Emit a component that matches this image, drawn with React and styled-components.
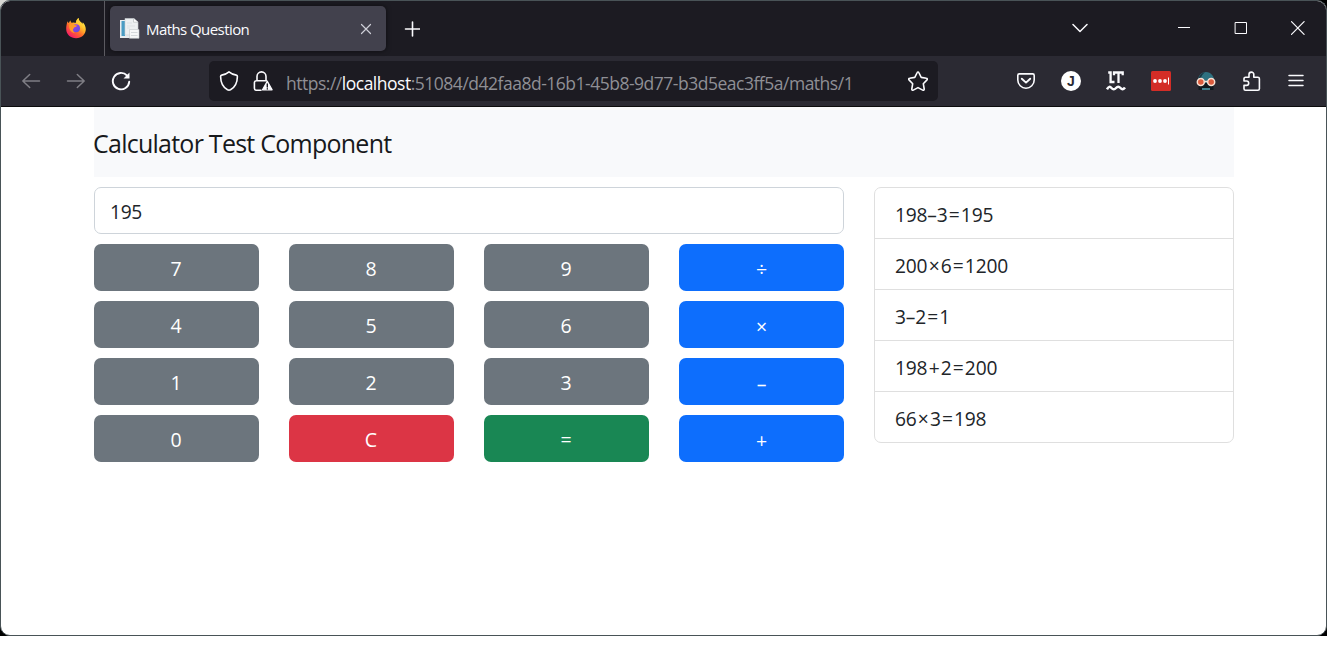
import React from 'react';
import styled, { createGlobalStyle } from 'styled-components';

const Global = createGlobalStyle`
  * { box-sizing: border-box; }
  html, body { margin: 0; background: #fff; overflow: hidden; }
  body { font-family: "Open Sans", "Noto Sans", sans-serif; }
  button { border: 0; padding: 0; background: none; color: inherit; font: inherit; }
  svg { display: block; flex: none; }
`;

const Desktop = styled.div`
  width: 1327px;
  height: 636px;
  background: linear-gradient(90deg, #d8d8d4 0 20px, #000 20px) top / 100% 20px no-repeat, #000;
`;
const Window = styled.div`
  width: 100%;
  height: 636px;
  border: 1px solid #495357;
  border-radius: 10px;
  overflow: hidden;
  background: #fff;
`;
const TitleBar = styled.header`
  height: 55px;
  display: flex;
  align-items: center;
  background: #1c1b22;
  color: #fbfbfe;
`;
const PinnedArea = styled.div`
  width: 104px;
  height: 55px;
  padding: 16px 0 0 64px;
  border-right: 1px solid #5c5b61;
`;
const Tab = styled.div`
  display: flex;
  align-items: center;
  width: 276px;
  height: 45px;
  margin-left: 5px;
  padding: 0 13px 0 10px;
  border-radius: 5px;
  background: #42414d;
  box-shadow: 0 0 5px rgba(0, 0, 0, 0.55);
`;
const TabTitle = styled.span`
  flex: 1;
  margin-left: 6px;
  font-size: 15px;
  line-height: 20px;
  letter-spacing: -0.57px;
  white-space: nowrap;
`;
const Cell = styled.button`
  width: ${(p) => p.$w || 44}px;
  height: 40px;
  display: flex;
  align-items: center;
  justify-content: center;
  color: ${(p) => (p.$dim ? '#7f7e85' : '#fbfbfe')};
`;
const WindowControls = styled.div`
  display: flex;
  margin-left: auto;
  padding-bottom: 1px;
`;
const Gap = styled.div`
  width: ${(p) => p.$w}px;
`;
const NavBar = styled.nav`
  height: 51px;
  display: flex;
  align-items: center;
  gap: 1px;
  padding-left: 8px;
  background: #2b2a33;
  border-bottom: 1px solid #0c0c0d;
`;
const UrlBar = styled.div`
  display: flex;
  align-items: center;
  width: 729px;
  height: 40px;
  margin: 0 65px 0 65px;
  padding: 0 10px;
  border-radius: 5px;
  background: #1c1b22;
  color: #fbfbfe;
`;
const Url = styled.div`
  flex: 1;
  padding-top: 3px;
  margin-left: 13px;
  font-size: 17.5px;
  line-height: 24px;
  letter-spacing: -0.49px;
  color: #8f8f95;
  white-space: nowrap;
  b { font-weight: 400; color: #fbfbfe; }
`;
const IconSpace = styled.span`
  margin-left: 14px;
`;

const Container = styled.main`
  width: 1140px;
  margin: 0 auto 0 93px;
  color: #212529;
`;
const PageHeader = styled.div`
  height: 70px;
  padding-top: 18px;
  background: #f8f9fb;
`;
const Heading = styled.h1`
  margin: 0 0 0 -1px;
  font-size: 25px;
  font-weight: 400;
  line-height: 36px;
  letter-spacing: -0.75px;
  color: #17191c;
`;
const Columns = styled.div`
  display: grid;
  grid-template-columns: 750px 360px;
  gap: 30px;
  align-items: start;
  padding-top: 10px;
`;
const Calculator = styled.section`
  display: grid;
  grid-template-columns: repeat(4, 165px);
  grid-auto-rows: 47px;
  gap: 10px 30px;
`;
const Display = styled.div`
  grid-column: 1 / -1;
  padding: 1px 15px 0;
  border: 1px solid #ced4da;
  border-radius: 7px;
  font-size: 19.2px;
  line-height: 45px;
  letter-spacing: -0.3px;
`;
const tones = { digit: '#6c757d', op: '#0d6efd', clear: '#dc3545', equals: '#198754' };
const Key = styled.button`
  && {
    padding: ${(p) => (p.$tone === 'op' ? '4px 0 0' : '2px 1px 0 0')};
    border-radius: 7px;
    background: ${(p) => tones[p.$tone]};
    color: #fff;
    font-size: 19.5px;
    line-height: 28px;
  }
`;
const History = styled.ul`
  margin: 0;
  padding: 0;
  list-style: none;
  border: 1px solid #dfdfdf;
  border-radius: 7px;
`;
const Entry = styled.li`
  height: 51px;
  padding: 4px 20px 0;
  font-size: 19.2px;
  line-height: 46px;
  letter-spacing: -0.2px;
  border-bottom: 1px solid #dfdfdf;
  &:last-child { height: 50px; border-bottom: 0; }
`;
const Operator = styled.span`
  margin: 0 1.3px;
`;

const Line = ({ size = 20, w = 1.5, children, ...rest }) => (
  <svg width={size} height={size} viewBox={`0 0 ${size} ${size}`} fill="none" stroke="currentColor"
    strokeWidth={w} strokeLinecap="round" strokeLinejoin="round" {...rest}>{children}</svg>
);

const Firefox = () => (
  <svg width="22" height="22" viewBox="0 0 22 22">
    <defs>
      <linearGradient id="fx" x1=".85" y1=".1" x2=".2" y2=".95">
        <stop offset="0" stopColor="#fff44f" /><stop offset=".35" stopColor="#ffb529" />
        <stop offset=".6" stopColor="#ff6a2b" /><stop offset="1" stopColor="#f5156c" />
      </linearGradient>
      <linearGradient id="globe" x1="0" y1="0" x2="1" y2="1">
        <stop offset="0" stopColor="#a83cf0" /><stop offset="1" stopColor="#5a50d8" />
      </linearGradient>
    </defs>
    <path fill="url(#fx)" d="M2.6 4.2c.3 1 .8 1.5 1.2 1.9L5.300 3.300c.2 1.300.9 2.100 1.600 2.600 1.300-.5 2.900-.3 3.700.2C11 3.900 12.200 2 13.600 1c0 2 1 3.200 2.400 4.300l1.300 1.500c.5-.3.5-1 .4-1.500 2 2 3.100 4.500 3.100 7 0 5-4.200 9-9.700 9S1.200 17.300 1.200 12c0-2.600.5-5.500 1.400-7.800z" />
    <circle cx="11" cy="11.300" r="4" fill="url(#globe)" />
    <path fill="#ff9a26" d="M4.300 7.600c1.600-1.200 3.800-.9 5 .1.800.6 1.700.6 2.700.7-.1 1.100-1.200 1.300-2.100 1.700-1 .5-1 1.700-1.900 2-.2 1.700.6 3 2 3.900-3.500.2-6.600-3.500-5.700-8.400z" />
    <path fill="#ffcf35" d="M13.600 1c0 2 1 3.200 2.400 4.300 2 1.700 3 4.200 2.300 7.300-.4-2.700-2-4.500-4.500-5.500-1.800-.8-2.700-2.200-2.300-3.700.4-1 1.100-1.800 2.100-2.400z" />
  </svg>
);
const Favicon = () => (
  <svg width="20" height="21" viewBox="0 0 20 21">
    <path d="M0 2h12v18H0z" fill="#e8ecef" />
    <path d="M1.500 3h3.500v15H1.500z" fill="#4a9cc4" />
    <path d="M5 .5h9l4 3.500V17H5z" fill="#edf0f2" stroke="#cbd0d3" strokeWidth=".6" />
    <path d="M13.500.8V4.200H18" fill="#fff" stroke="#b7bdc0" strokeWidth=".7" />
    <path d="M7 5h5M7 8h8M7 10h3" stroke="#dde1e4" />
    <path d="M9.500 11.500H19V20.300H9.500z" fill="#f7f8f9" stroke="#c3c8cb" strokeWidth=".6" />
    <path d="M11 14.500h6.500M11 17.500h6.500" stroke="#d5d9dc" />
  </svg>
);
const Back = () => <Line><path d="M18.500 10H1.800M8.700 3.500L1.800 10l6.900 6.500" /></Line>;
const Forward = () => <Line><path d="M1.500 10h16.700M11.300 3.500l6.900 6.500-6.900 6.500" /></Line>;
const Reload = () => (
  <Line w={1.900}>
    <path d="M18.200 10.800a8.200 8.200 0 1 1-2.200-6.300l1 1" />
    <path d="M18.500 1.500V7.500H12.500z" fill="currentColor" stroke="none" />
  </Line>
);
const Shield = () => (
  <Line w={1.600}><path d="M10 .9c2 1.700 4.500 2.900 7.300 3.200.7.1 1.100.6 1.100 1.300-.1 6.200-2.300 10.800-6.900 13.300-1 .5-2 .5-3 0C3.900 16.200 1.700 11.600 1.600 5.400c0-.7.4-1.200 1.100-1.300C5.500 3.800 8 2.600 10 .9z" /></Line>
);
const Lock = () => (
  <Line w={1.600}>
    <path d="M4 9.500V5.400a4.500 4.500 0 0 1 9 0v4M8 19.200H3.400a2 2 0 0 1-2-2v-5.500a2 2 0 0 1 2-2H13.500" />
    <path d="M14.300 10.300l4.800 8.500H9.500z" fill="#fbfbfe" strokeWidth="1.300" />
    <path d="M14.300 13v3M14.300 17.800v.2" stroke="#1c1b22" strokeWidth="1.400" />
  </Line>
);
const Star = () => (
  <Line w={1.600}><path d="M9.200 1.500c.3-.7 1.300-.7 1.600 0l2.400 4.900 5.200.8c.9.100 1.200 1.100.6 1.700l-3.700 3.800.9 5.300c.1.900-.7 1.500-1.500 1.100L10 16.600l-4.700 2.500c-.8.4-1.600-.2-1.500-1.100l.9-5.300L1 8.900c-.6-.6-.3-1.600.6-1.700l5.200-.8z" /></Line>
);
const Pocket = () => (
  <Line w={1.600}>
    <path d="M3.300 2.900h13.400c.9 0 1.500.6 1.500 1.500V9a8.200 8.200 0 0 1-16.400 0V4.400c0-.9.600-1.500 1.500-1.500z" />
    <path d="M5.800 7.700L10 11.600l4.200-3.900" strokeWidth="1.900" />
  </Line>
);
const Avatar = styled.span`
  width: 20px;
  height: 20px;
  border-radius: 50%;
  background: #fff;
  color: #2b2a33;
  font: 700 14px/20px "Liberation Sans", sans-serif;
  text-align: center;
`;
const LanguageTool = () => (
  <Line w={2.300} strokeLinecap="butt">
    <path d="M2.200 1.500H4.600V11H8.500M8 4.300V1.500H16.700V4.300M12.500 1.500V12" strokeLinejoin="miter" />
    <path d="M1 18.300c1.600-3 3-3 4.500-1.300s3 1.700 4.500 0 3-1.700 4.500 0 3 1.700 4.500-.5" strokeWidth="2.500" />
  </Line>
);
const LastPass = () => (
  <svg width="20" height="20" viewBox="0 0 20 20">
    <rect width="20" height="20" rx="1.500" fill="#d32d27" />
    <g fill="#fff"><circle cx="4" cy="10" r="1.900" /><circle cx="9" cy="10" r="1.900" /><circle cx="14" cy="10" r="1.900" /><path d="M17 6.500h1v7h-1z" /></g>
  </svg>
);
const Goggles = () => (
  <svg width="20" height="20" viewBox="0 0 20 20">
    <path d="M1.500 12C1.500 5 5 1 10 1s8.500 4 8.500 11z" fill="#2e7180" />
    <path d="M2.500 7C4 3.500 6.500 1.700 9 1.300 6.500 3 5 5.500 5 7.500z" fill="#173540" />
    <path d="M2.500 12h15v7h-15z" fill="#10191f" />
    <path d="M6 17h8V19H6z" fill="#3f7f8c" />
    <g fill="#db5b3d" stroke="#f6dfd2" strokeWidth="1.500"><circle cx="4.800" cy="11" r="3.500" /><circle cx="15.200" cy="11" r="3.500" /></g>
    <path d="M8.300 10.500h3.400" stroke="#f6dfd2" strokeWidth="1.500" />
  </svg>
);
const Puzzle = () => (
  <Line w={1.600}><path d="M4.700 6.200H8V3.500a2.400 2.400 0 0 1 4.800 0v2.700H16.900a1.500 1.500 0 0 1 1.500 1.500V17.700a1.500 1.500 0 0 1-1.500 1.500H4.500a1.500 1.500 0 0 1-1.500-1.500V14.400H5.500a2.200 2.200 0 0 0 0-4.400H3V7.700a1.500 1.500 0 0 1 1.700-1.500z" /></Line>
);
const Menu = () => <Line><path d="M3 4.500h14M3 9.500h14M3 14.500h14" /></Line>;

const keys = [
  ['7', 'digit'], ['8', 'digit'], ['9', 'digit'], ['÷', 'op'],
  ['4', 'digit'], ['5', 'digit'], ['6', 'digit'], ['×', 'op'],
  ['1', 'digit'], ['2', 'digit'], ['3', 'digit'], ['–', 'op'],
  ['0', 'digit'], ['C', 'clear'], ['=', 'equals'], ['+', 'op'],
];
const history = ['198–3=195', '200×6=1200', '3–2=1', '198+2=200', '66×3=198'];

const Sum = ({ text }) => text.split(/([×+=])/).map((part, i) => (
  i % 2 ? <Operator key={i}>{part}</Operator> : part
));

export default function App() {
  return (
    <Desktop>
      <Global />
      <Window>
        <TitleBar>
          <PinnedArea><Firefox /></PinnedArea>
          <Tab>
            <Favicon />
            <TabTitle>Maths Question</TabTitle>
            <Line size={14} w={1.200} color="#cfcfd8"><path d="M2.500 2.500l9 9M11.500 2.500l-9 9" /></Line>
          </Tab>
          <Gap $w={4} />
          <Cell><Line size={16} w={1.600}><path d="M8.500 1v14M1.500 8h14" /></Line></Cell>
          <WindowControls>
            <Cell><Line size={16}><path d="M1 4.500l7 7 7-7" /></Line></Cell>
            <Gap $w={53} />
            <Cell $w={57}><Line size={14} w={1} strokeLinecap="butt"><path d="M1 6.500h12" /></Line></Cell>
            <Cell $w={57}><Line size={14} w={1} strokeLinejoin="miter"><path d="M1.500 1.500h11v11h-11z" /></Line></Cell>
            <Cell $w={57}><Line size={14} w={1.200}><path d="M.5.700l12.600 12.600M13.100.7L.5 13.300" /></Line></Cell>
          </WindowControls>
        </TitleBar>
        <NavBar>
          <Cell $dim><Back /></Cell>
          <Cell $dim><Forward /></Cell>
          <Cell><Reload /></Cell>
          <UrlBar>
            <Shield />
            <IconSpace><Lock /></IconSpace>
            <Url>https://<b>localhost</b>:51084/d42faa8d-16b1-45b8-9d77-b3d5eac3ff5a/maths/1</Url>
            <Star />
          </UrlBar>
          <Cell><Pocket /></Cell>
          <Cell><Avatar>J</Avatar></Cell>
          <Cell><LanguageTool /></Cell>
          <Cell><LastPass /></Cell>
          <Cell><Goggles /></Cell>
          <Cell><Puzzle /></Cell>
          <Cell><Menu /></Cell>
        </NavBar>
        <Container>
          <PageHeader><Heading>Calculator Test Component</Heading></PageHeader>
          <Columns>
            <Calculator>
              <Display>195</Display>
              {keys.map(([label, tone]) => <Key key={label} $tone={tone}>{label}</Key>)}
            </Calculator>
            <History>
              {history.map((item) => <Entry key={item}><Sum text={item} /></Entry>)}
            </History>
          </Columns>
        </Container>
      </Window>
    </Desktop>
  );
}
